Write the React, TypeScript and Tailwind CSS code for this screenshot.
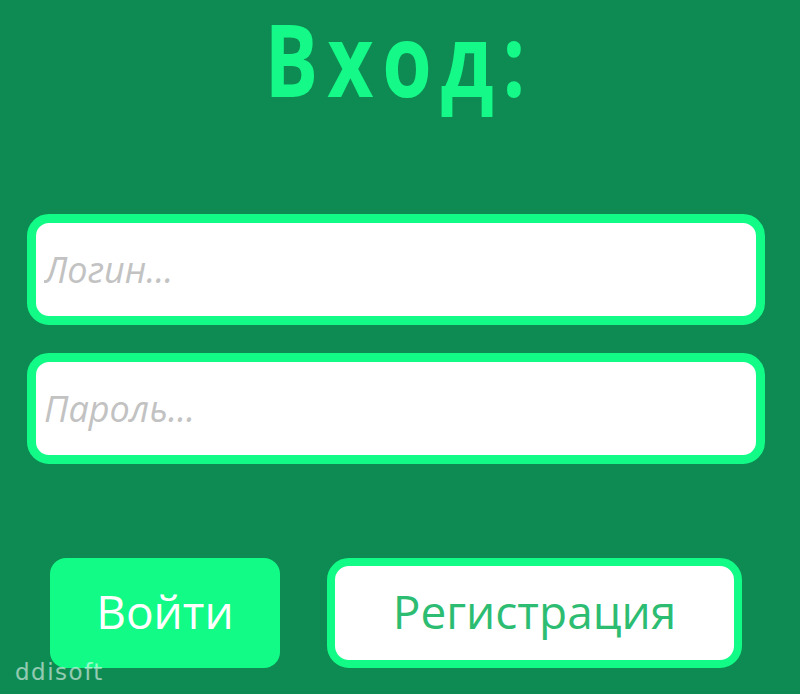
export default function App() {
  return (
    <div className="relative h-[694px] w-full overflow-hidden bg-[#0d8b52] font-['Open_Sans',sans-serif]">
      <h1 className="-mt-[17px] flex justify-center text-[100px] font-bold leading-normal text-[#14f987]">
        <span className="mr-[10px] inline-block scale-x-[0.8] pl-[11px] tracking-[11px]">Вход:</span>
      </h1>

      <div className="mt-[81px] flex flex-col gap-[28px] pl-[27px] pr-[35px]">
        <input
          type="text"
          placeholder="Логин..."
          className="h-[111px] w-full rounded-[22px] border-[9px] border-[#12fb86] bg-white px-[8px] text-[36px] text-[#333] outline-none placeholder:italic placeholder:text-[#c2c2c2]"
        />
        <input
          type="password"
          placeholder="Пароль..."
          className="h-[111px] w-full rounded-[22px] border-[9px] border-[#12fb86] bg-white px-[8px] text-[36px] text-[#333] outline-none placeholder:italic placeholder:text-[#c2c2c2]"
        />
      </div>

      <div className="mt-[94px] flex gap-[47px] pl-[50px]">
        <button className="flex h-[110px] w-[230px] items-center justify-center rounded-[16px] bg-[#12fb86] pb-[4px] text-[46px] text-white">
          Войти
        </button>
        <button className="flex h-[110px] w-[415px] items-center justify-center rounded-[22px] border-[8px] border-[#12fb86] bg-white pb-[4px] text-[46px] text-[#2dbd72]">
          Регистрация
        </button>
      </div>

      <div className="absolute left-[15px] top-[655px] font-['DejaVu_Sans',sans-serif] text-[23px] tracking-[1.5px] text-white/55">
        ddisoft
      </div>
    </div>
  )
}
